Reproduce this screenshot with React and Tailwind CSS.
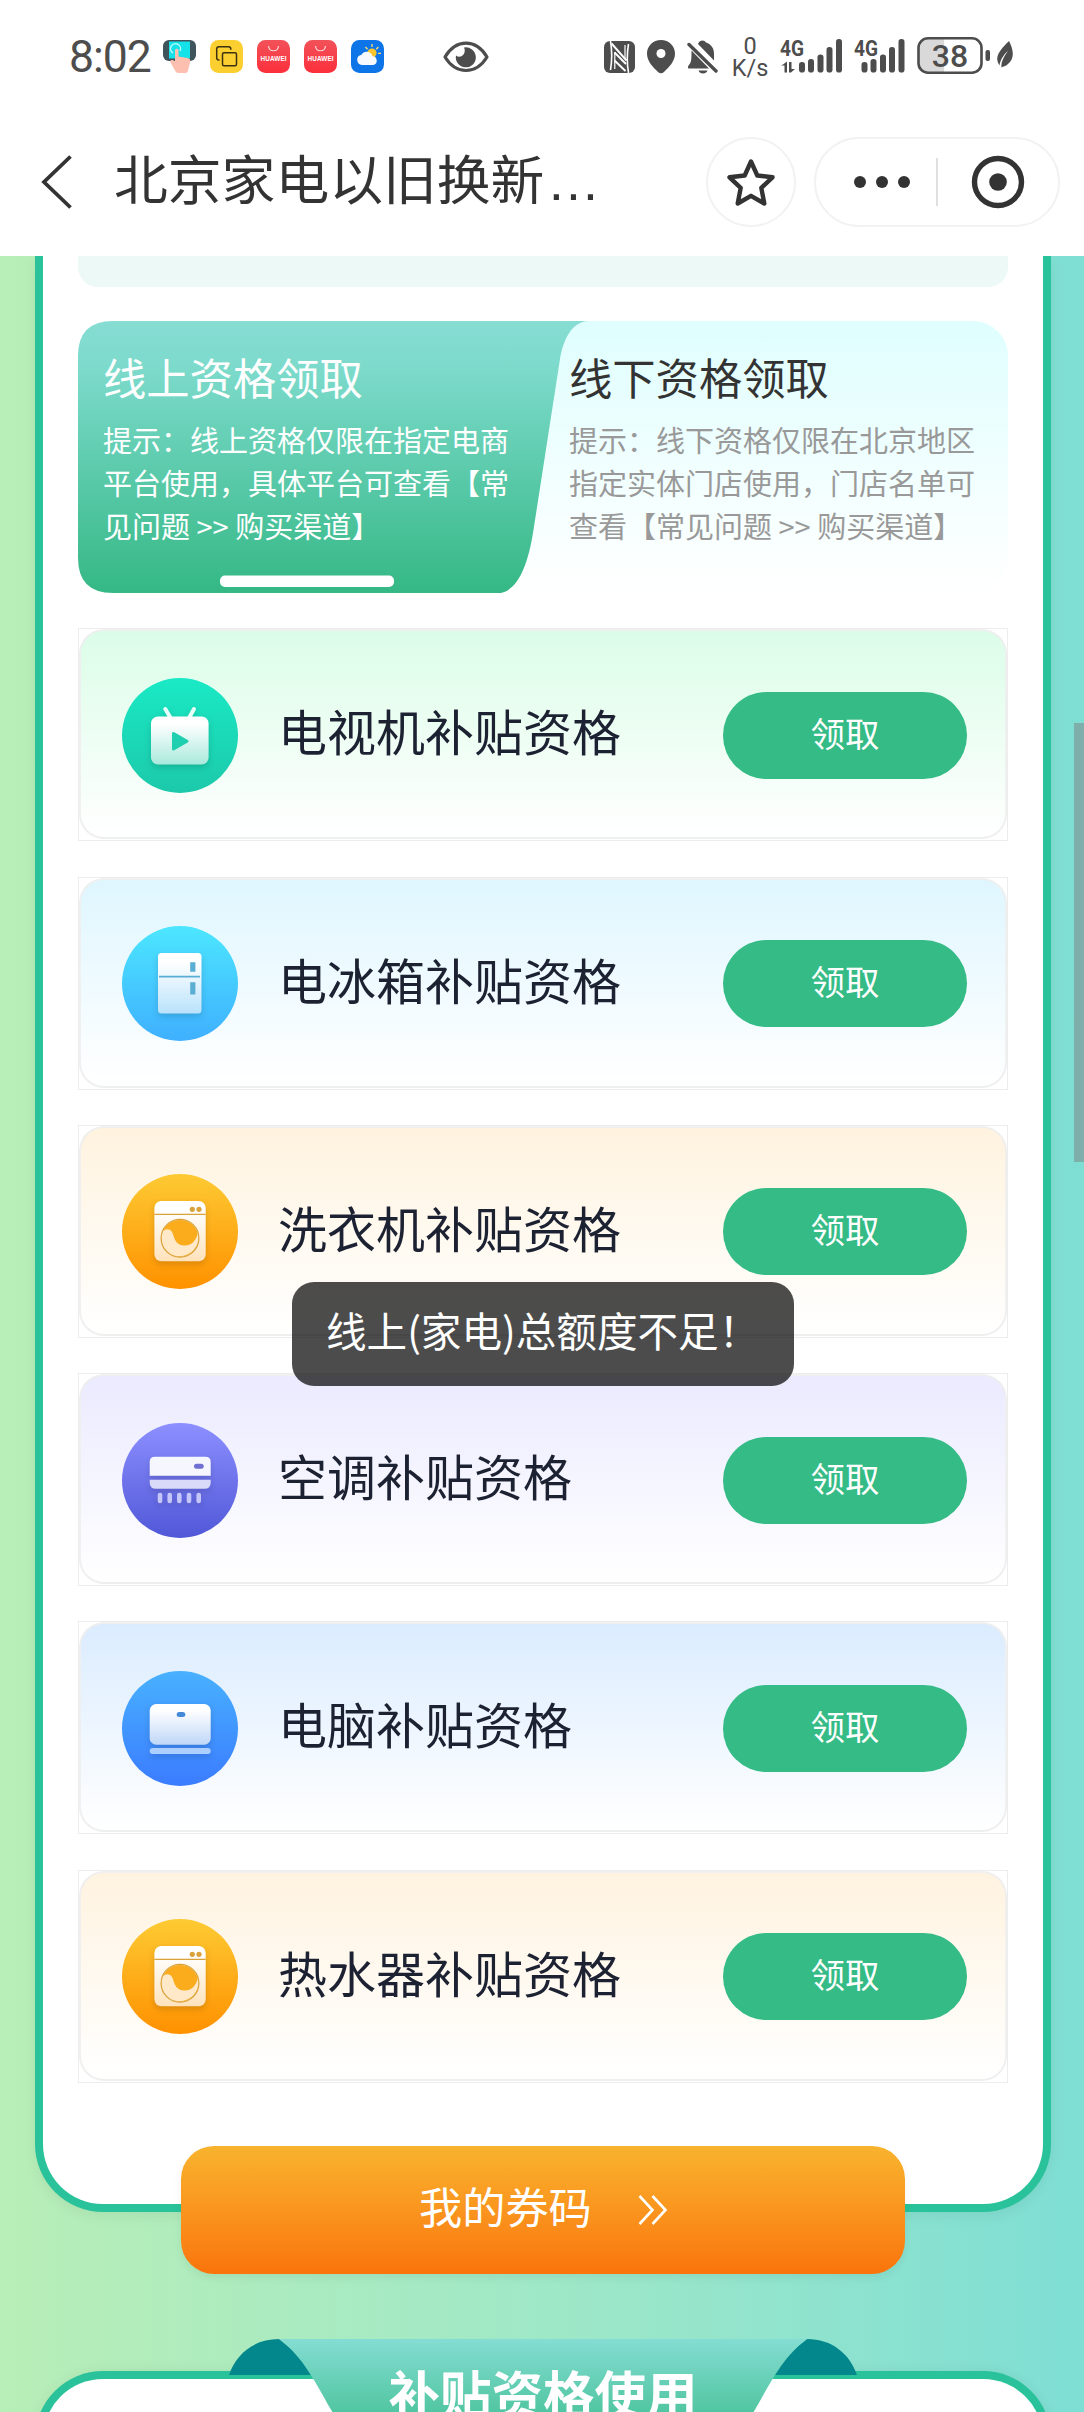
import React from 'react';

const items = [
  { name: '电视机补贴资格', icon: 'tv', bg: 'from-[#dbfde8]' },
  { name: '电冰箱补贴资格', icon: 'fridge', bg: 'from-[#dff6ff]' },
  { name: '洗衣机补贴资格', icon: 'washer', bg: 'from-[#fff3df]' },
  { name: '空调补贴资格', icon: 'ac', bg: 'from-[#ebeaff]' },
  { name: '电脑补贴资格', icon: 'pc', bg: 'from-[#dbecff]' },
  { name: '热水器补贴资格', icon: 'washer', bg: 'from-[#fff3e0]' },
];

// top / bottom colour of the disc, bottom colour of the glyph, accent
const tones = {
  tv: ['#1ae9c5', '#1cc9aa', '#a9e9dc', '#1fcfb0'],
  fridge: ['#4ce6ff', '#3fb0ff', '#b9e2fb', '#5aaed4'],
  washer: ['#fdca33', '#ff9100', '#ffe2bb', '#d9a23a'],
  ac: ['#8c8fff', '#5158d8', '#cfd0f8', '#6f70cf'],
  pc: ['#48b1ff', '#3b7cff', '#bfd7f8', '#4489d8'],
};

const glyphs = {
  tv: (fill, accent) => (
    <>
      <path d="M43.3 31l5.4 9M72 31l-5 9" stroke="#e6fff9" strokeWidth="4" strokeLinecap="round" />
      <rect x="29" y="38.5" width="57.6" height="48" rx="7" fill={fill} />
      <path d="M51.5 55.5v15.5l13.5-7.8z" fill={accent} stroke={accent} strokeWidth="3" strokeLinejoin="round" />
    </>
  ),
  fridge: (fill, accent) => (
    <>
      <rect x="36" y="27" width="43.5" height="60.5" rx="3.5" fill={fill} />
      <path d="M37 50.7h41" stroke={accent} strokeWidth="1.8" />
      <path d="M68.2 36.2h5.2v9.6h-5.2zM68.2 56.2h5.2v12.2h-5.2z" fill={accent} />
    </>
  ),
  washer: (fill, accent) => (
    <>
      <rect x="32.4" y="27" width="51.3" height="60.3" rx="7" fill={fill} />
      <path d="M32.4 40.4h51.3" stroke={accent} strokeWidth="1.3" />
      <circle cx="70.3" cy="35.3" r="2.6" fill={accent} />
      <circle cx="77" cy="35.3" r="2.6" fill={accent} />
      <circle cx="58" cy="64.3" r="18.4" fill="#fbac1d" />
      <path d="M40 59c2-4.500 8-5 10.300-.5 2 4 2.200 12.500 11.500 13 9 .3 12.500-6 14.300-13 1.500 9-1.500 15-6 19-8 6.800-19 6-25.500-.5-4.600-4.700-6-11-4.600-18z" fill="#ffe9c9" />
      <circle cx="58" cy="64.3" r="18.9" fill="none" stroke={accent} strokeWidth="1.2" />
    </>
  ),
  ac: (fill, accent) => (
    <>
      <path d="M27.700 52.800v-13.800q0-5.300 5.300-5.300h50.400q5.300 0 5.300 5.300v13.800z" fill="#f6f6ff" />
      <path d="M27.700 56.700h61v2.700q0 6.300-6.300 6.300h-48.400q-6.300 0-6.300-6.300z" fill="#d9daf9" />
      <rect x="72" y="40.700" width="9.700" height="5" rx="2.500" fill={accent} />
      {[38, 47.7, 57.3, 67, 76.7].map((x) => (
        <path key={x} d={`M${x} 72v6`} stroke="#c5c7fa" strokeWidth="4.6" strokeLinecap="round" />
      ))}
    </>
  ),
  pc: (fill, accent) => (
    <>
      <rect x="27.700" y="33" width="61" height="40.700" rx="6.500" fill={fill} />
      <rect x="54.700" y="41" width="8.600" height="5" rx="2.500" fill={accent} />
      <rect x="27.700" y="77" width="61" height="6" rx="3" fill="#accfff" />
    </>
  ),
};

const ApplianceIcon = ({ type, id }) => {
  const [top, bottom, glyphEnd, accent] = tones[type];
  return (
    <svg viewBox="0 0 116 115" className="h-[115px] w-[116px] shrink-0" fill="none">
      <defs>
        <linearGradient id={`disc${id}`} x1="0" y1="0" x2="0" y2="1">
          <stop offset="0" stopColor={top} />
          <stop offset="1" stopColor={bottom} />
        </linearGradient>
        <linearGradient id={`glyph${id}`} x1="0" y1="0" x2="0" y2="1">
          <stop offset="0.150" stopColor="#fff" />
          <stop offset="1" stopColor={glyphEnd} />
        </linearGradient>
      </defs>
      <ellipse cx="58" cy="57.500" rx="58" ry="57.500" fill={`url(#disc${id})`} />
      <g className="drop-shadow-[0_3px_3px_rgba(0,0,0,0.14)]">{glyphs[type](`url(#glyph${id})`, accent)}</g>
    </svg>
  );
};

const HuaweiIcon = ({ id }) => (
  <svg viewBox="0 0 33 33" className="size-[33px]">
    <defs>
      <linearGradient id={id} x1="0" y1="0" x2="0" y2="1">
        <stop offset="0" stopColor="#f2525a" />
        <stop offset="1" stopColor="#fb2f3b" />
      </linearGradient>
    </defs>
    <rect width="33" height="33" rx="8.500" fill={`url(#${id})`} />
    <path d="M11.500 6c.5 6.300 9.500 6.300 10 0" fill="none" stroke="#ffd5d5" strokeWidth="1.200" />
    <text x="16.500" y="21.300" textAnchor="middle" fontSize="6.400" fontWeight="700" textLength="26" fill="#fff" fontFamily="Liberation Sans, sans-serif">HUAWEI</text>
  </svg>
);

const Signal = ({ bars, children, className }) => (
  <svg viewBox="0 0 64 40" className={className} fill="#4d4d4d">
    <text x="0" y="18.500" fontSize="22.500" fontWeight="700" textLength="24" lengthAdjust="spacingAndGlyphs" fontFamily="Roboto, sans-serif">4G</text>
    {bars.map(([x, y]) => (
      <rect key={x} x={x} y={y} width="6" height={35.5 - y} rx="2.800" />
    ))}
    {children}
  </svg>
);

const StatusBar = () => (
  <div className="flex h-[110px] items-start pt-9 text-[#4d4d4d]">
    <span className="ml-[69px] w-[94px] font-[Roboto,sans-serif] text-[44.500px] leading-[43px] tracking-[-1px]">8:02</span>
    <div className="mt-1 flex gap-[14px]">
      <svg viewBox="0 0 33 33" className="size-[33px]">
        <rect y="0" width="33" height="21" rx="6" fill="#40545c" />
        <rect x="6" y="1.500" width="21" height="17" fill="#13e2e8" />
        <path d="M10 13a5 5 0 1 1 7-2" fill="none" stroke="#b5fbff" strokeWidth="1.500" />
        <path d="M12 10.500c0-2.500 3.500-2.500 3.500 0v6l9 1.500c2.500.5 3 2 2.500 4.500l-2 8c-.5 2-1.500 2.500-3 2.500h-6c-2 0-3-.7-4-2.500l-4.500-8c-1-2.500 1.500-3.500 4.500-1z" fill="#fdbfb0" />
      </svg>
      <svg viewBox="0 0 33 33" className="size-[33px]" fill="none" stroke="#3c3210" strokeWidth="1.500">
        <rect width="33" height="33" rx="8.500" fill="#fbcf2f" stroke="none" />
        <path d="M9.500 20H9q-2.300 0-2.300-2.300V9q0-2.300 2.300-2.300h9.500q2.300 0 2.300 2.300v.8" />
        <rect x="12.500" y="12.700" width="14" height="13" rx="1.500" />
      </svg>
      <HuaweiIcon id="hw1" />
      <HuaweiIcon id="hw2" />
      <svg viewBox="0 0 33 33" className="size-[33px]">
        <rect width="33" height="33" rx="8.500" fill="#0d75e8" />
        <path d="M21 4v3M14.500 7l2 2.200M27.300 7l-2 2.200M30 13.300h-3" stroke="#ffdf70" strokeWidth="1.300" />
        <circle cx="21" cy="13" r="4.600" fill="#fcc52d" />
        <path d="M11 25a5.200 5.200 0 0 1-.5-10.300 6 6 0 0 1 11 1.500 4.500 4.500 0 0 1 1 8.800z" fill="#f6faff" />
      </svg>
    </div>
    <svg viewBox="0 0 46 32" className="mt-[5px] ml-[59px] h-8 w-[46px]">
      <path d="M2 16C13-2.500 33-2.500 44 16 33 34 13 34 2 16z" fill="none" stroke="#4d4d4d" strokeWidth="3.200" strokeLinejoin="round" />
      <path d="M21 6.500a10 10 0 1 1-8 8c4.500 4 11-2 8-8z" fill="#4d4d4d" />
    </svg>

    <svg viewBox="0 0 31 32" className="mt-[5px] ml-[115px] h-8 w-[31px]">
      <rect width="31" height="32" rx="6" fill="#4d4d4d" />
      <path d="M6.500 0c1.500 9 1.500 20 0 29M24.500 32c-1.500-9-1.500-20 0-29" fill="none" stroke="#fff" strokeWidth="1.600" />
      <path d="M7.500 2.500L22.500 19.500M10.500 11.500L22 23M10.500 19.500L21.500 30" fill="none" stroke="#fff" strokeWidth="1.900" />
      <path d="M10.800 11v17M21 4v14" fill="none" stroke="#fff" strokeWidth="1.200" />
    </svg>
    <svg viewBox="0 0 28 34" className="mt-1 ml-3 h-[34px] w-7">
      <path d="M14 0c8 0 14 6 14 13.500 0 8-6 13.500-11 18.500q-3 2.500-6 0C6 27 0 21.500 0 13.500 0 6 6 0 14 0z" fill="#4d4d4d" />
      <circle cx="14" cy="13.500" r="4.500" fill="#fff" />
    </svg>
    <svg viewBox="0 0 31 34" className="mt-1 ml-3 h-[34px] w-[31px]" fill="#4d4d4d">
      <path d="M11 4c1.500-4.500 6.500-4.500 8-1.500 5.500 2 8 6 8 11v7zM4.500 10.500L22 28.500H2.500c-2 0-2-2-.5-3.500 2.500-3 2.500-6 2.500-14.500zM11.500 30.500h9c-1 4-8 4-9 0z" />
      <path d="M2 4.500l27 26.500" stroke="#4d4d4d" strokeWidth="3.400" strokeLinecap="round" />
      <path d="M5.500 3.500l25 25" stroke="#fff" strokeWidth="1.400" />
    </svg>
    <div className="ml-[14px] flex w-[36px] flex-col items-center font-[Roboto,sans-serif] text-[23.500px] leading-[21.500px]">
      <span>0</span>
      <span>K/s</span>
    </div>
    <Signal className="mt-[1px] ml-3 h-10 w-16 overflow-visible" bars={[[19, 25], [28, 22], [37.500, 17.500], [46.500, 10], [56, 2]]}>
      <path d="M3 27.500l4-3v11H4.500v-7H1zM9 25h2.500v7H15l-4 3.500H9z" />
    </Signal>
    <Signal className="mt-[1px] ml-[10px] h-10 w-16 overflow-visible" bars={[[7.500, 25], [16.500, 22], [26, 17.500], [35, 10], [44.500, 2]]} />
    <svg viewBox="0 0 98 40" className="-ml-[1px] h-10 w-[98px]" fill="#4d4d4d">
      <path d="M11 2.500h16v34H11q-9 0-9-9v-16q0-9 9-9z" fill="#d9d9d9" />
      <rect x="1.500" y="2.300" width="63" height="34.400" rx="9.500" fill="none" stroke="#4d4d4d" strokeWidth="2.600" />
      <text x="33" y="31" textAnchor="middle" fontSize="32" fontWeight="500" fontFamily="Roboto, sans-serif">38</text>
      <rect x="68.500" y="14" width="4.500" height="11" rx="2" />
      <path d="M92 5c4.500 9 6 17-1 23-2.500 2.500-5 2.300-6.500 3.500C83.500 27 87 20 91 15c-5 4-8 10-8.500 14.500C77 21 82 15 92 5z" />
    </svg>
  </div>
);

const NavBar = () => (
  <div className="flex h-[146px] items-start pt-[27px] text-[#333]">
    <svg viewBox="0 0 32 54" className="mt-[18px] ml-[41px] h-[54px] w-8" fill="none" stroke="#333" strokeWidth="3.800">
      <path d="M29.500 1.500L3 27l26.500 25.500" />
    </svg>
    <h1 className="-mt-[2px] ml-[41px] w-[592px] text-[53.800px] leading-[84px] whitespace-nowrap">
      北京家电以旧换新<span className="ml-[2px] font-['Liberation_Sans',sans-serif]">…</span>
    </h1>
    <button className="flex size-[90px] shrink-0 items-center justify-center rounded-full border-2 border-[#f2f2f2]">
      <svg viewBox="0 0 50 52" className="mt-1 h-[52px] w-[50px]" fill="none" stroke="#333" strokeWidth="4.400" strokeLinejoin="round">
        <path d="M25 3.500l6.300 14 15.200 1.800-11.200 10.600 3 15.600L25 37.800l-13.300 7.700 3-15.600L3.500 19.300l15.200-1.800z" />
      </svg>
    </button>
    <div className="ml-[18px] flex h-[90px] w-[246px] shrink-0 items-center rounded-full border-2 border-[#f2f2f2]">
      <svg viewBox="0 0 58 14" className="ml-[37px] h-[14px] w-[58px]" fill="#333">
        <circle cx="7" cy="7" r="6" />
        <circle cx="29" cy="7" r="6" />
        <circle cx="51" cy="7" r="6" />
      </svg>
      <div className="ml-[25px] h-12 w-[2px] bg-[#e0e0e0]" />
      <svg viewBox="0 0 54 54" className="ml-[33px] size-[54px]">
        <circle cx="27" cy="27" r="23.500" fill="none" stroke="#333" strokeWidth="5.400" />
        <circle cx="27" cy="27" r="8.800" fill="#333" />
      </svg>
    </div>
  </div>
);

const ChannelTabs = () => (
  <div className="relative mt-[34px] h-[272px] rounded-[35px] bg-linear-to-b from-[#dffefe] to-white">
    <svg viewBox="0 0 510 272" className="absolute top-0 left-0 h-[272px] w-[510px]">
      <defs>
        <linearGradient id="activeTab" x1="0" y1="0" x2="0" y2="1">
          <stop offset="0" stopColor="#86ddd3" />
          <stop offset="0.180" stopColor="#7cdacb" />
          <stop offset="1" stopColor="#35b885" />
        </linearGradient>
      </defs>
      <path d="M35 0H509C495 2 486 15 482 38L455 212C450 242 441 268 423 272H35Q0 272 0 237V35Q0 0 35 0z" fill="url(#activeTab)" />
      <rect x="142" y="254.500" width="174" height="11.500" rx="5" fill="#fff" />
    </svg>
    <div className="relative flex pt-[24px] pl-[25px]">
      <div className="w-[466px] text-white">
        <h2 className="text-[43.300px] leading-[62px]">线上资格领取</h2>
        <p className="mt-[11px] w-[409px] text-[29px] leading-[43px]">提示：线上资格仅限在指定电商平台使用，具体平台可查看【常见问题 &gt;&gt; 购买渠道】</p>
      </div>
      <div>
        <h2 className="text-[43.300px] leading-[62px] text-[#333]">线下资格领取</h2>
        <p className="mt-[11px] w-[409px] text-[29px] leading-[43px] text-[#999]">提示：线下资格仅限在北京地区指定实体门店使用，门店名单可查看【常见问题 &gt;&gt; 购买渠道】</p>
      </div>
    </div>
  </div>
);

const SubsidyRow = ({ item, id }) => (
  <div className="h-[213px] border border-[#ededed] pb-[1px]">
    <div className={`flex h-full items-center rounded-[25px] border-2 border-[#eee]/90 bg-linear-to-b to-white pt-[2px] pl-[41px] pr-[38px] ${item.bg}`}>
      <ApplianceIcon type={item.icon} id={id} />
      <span className="-mt-[10px] ml-[40px] flex-1 text-[49px] leading-[70px] text-[#1d2233]">{item.name}</span>
      <button className="h-[87px] w-[244px] rounded-full bg-[#35bb86] pb-[7px] text-[34.500px] leading-[50px] text-white">领取</button>
    </div>
  </div>
);

const App = () => {
  return (
    <div className="relative flex h-[2412px] w-[1084px] flex-col overflow-hidden bg-linear-to-r from-[#b8eeb7] via-[#9fe8c7] to-[#7eded4] font-['Noto_Sans_CJK_SC',sans-serif]">
      <header className="relative h-[256px] shrink-0 bg-white">
        <StatusBar />
        <NavBar />
      </header>

      <section className="ml-[35px] h-[1956px] w-[1016px] shrink-0 rounded-b-[68px] border-8 border-t-0 border-[#2ac29a] bg-white px-[35px] shadow-[0_4px_14px_rgba(0,0,0,0.06)]">
        <div className="h-[31px] rounded-b-[20px] bg-[#edf9f6]" />
        <ChannelTabs />
        <div className="mt-[35.300px] flex flex-col gap-[35.300px]">
          {items.map((item, i) => (
            <SubsidyRow key={item.name} item={item} id={i} />
          ))}
        </div>
      </section>

      <button className="relative -mt-[66px] ml-[181px] flex h-[128px] w-[724px] shrink-0 items-center rounded-[33px] bg-linear-to-b from-[#f8b32d] to-[#fa740b] pl-[238px] text-[43.200px] text-white shadow-[0_4px_10px_rgba(0,0,0,0.06)]">
        <span className="-mt-[9px]">我的券码</span>
        <svg viewBox="0 0 32 32" className="ml-[45px] size-8" fill="none" stroke="#fff" strokeWidth="2.600">
          <path d="M2.500 2l13 14-13 14M15.500 2l13 14-13 14" />
        </svg>
      </button>

      <section className="relative mt-[97px] ml-[35px] h-[300px] w-[1016px] shrink-0 rounded-t-[68px] border-8 border-b-0 border-[#2ac29a] bg-white shadow-[0_0_14px_rgba(0,0,0,0.06)]">
        <div className="absolute -top-10 left-[186px] flex h-[110px] w-[628px] justify-center">
          <svg viewBox="0 0 628 110" className="absolute inset-0 h-[110px] w-[628px]">
            <defs>
              <linearGradient id="ribbon" x1="0" y1="0" x2="0" y2="1">
                <stop offset="0" stopColor="#84ddd3" />
                <stop offset="1" stopColor="#38ba88" />
              </linearGradient>
            </defs>
            <path d="M0 36C7 15 25 0 50 0L95 36zM628 36C621 15 603 0 578 0L533 36z" fill="#03878c" />
            <path d="M50 0H578C553 18 540 47 524 74 512 95 505 110 490 110H138C123 110 116 95 104 74 88 47 75 18 50 0z" fill="url(#ribbon)" />
          </svg>
          <h2 className="relative mt-[16px] text-[51.500px] leading-[74px] font-bold text-white">补贴资格使用</h2>
        </div>
      </section>

      <div className="absolute top-[723px] right-0 h-[439px] w-[10px] bg-[#7f7f7f]/50" />

      {/* toast */}
      <div className="absolute top-[1282px] left-[292px] h-[104px] w-[502px] rounded-[22px] bg-black/70 pt-[18px] pl-[34px] text-[40.600px] leading-[60px] whitespace-nowrap text-white">
        线上(家电)总额度不足！
      </div>
    </div>
  );
};

export default App;
